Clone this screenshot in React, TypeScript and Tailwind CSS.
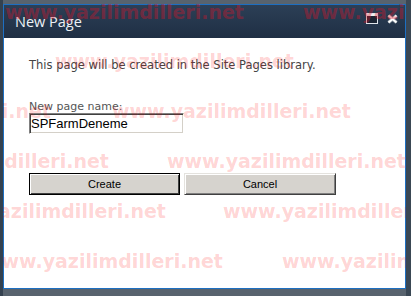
import * as React from 'react';

// watermark rows: [left, top]
const marks: [number, number][] = [
  [55, 52],
  [-188, 102],
  [112, 102],
  [-130, 152],
  [167, 152],
  [-73, 202],
  [223, 202],
  [-16, 252],
  [282, 252],
];

function App() {
  return (
    <div className="relative w-[411px] h-[296px] overflow-hidden bg-[#58636e] pt-[4px] pb-[7px] border-l-[3px] border-l-[#34414f] border-r-[5px] border-r-[#3a4754]">
      <div className="flex flex-col h-full border border-[#1d6fc2] bg-white">
        {/* Title bar */}
        <div className="flex h-[33px] bg-gradient-to-b from-[#2c3f56] to-[#1f2f44]">
          <span className="self-center pl-[11px] font-['Open_Sans'] text-[14.5px] text-[#eef2f6]">New Page</span>
          <div className="ml-auto mr-[7px] pt-[8px] flex items-start gap-[9px]">
            <svg width="12" height="11" viewBox="0 0 12 11">
              <rect x="0.5" y="0.5" width="11" height="10" fill="#1a2433" stroke="#dfe4ea" />
              <rect x="1" y="1" width="10" height="2" fill="#eef1f4" />
            </svg>
            <svg width="11" height="10" viewBox="0 0 11 10" className="mt-[1px]">
              <path d="M1.5 1.5 L9.5 8.5 M9.5 1.5 L1.5 8.5" stroke="#8a949f" strokeWidth="3.6" />
              <path d="M1.5 1.5 L9.5 8.5 M9.5 1.5 L1.5 8.5" stroke="#ffffff" strokeWidth="1.8" />
            </svg>
          </div>
        </div>

        {/* Body */}
        <div className="flex-1 pl-[25px] pt-[20px]">
          <p className="font-['DejaVu_Sans'] text-[11.5px] leading-[14px] text-[#444]">
            This page will be created in the Site Pages library.
          </p>
          <p className="mt-[28px] font-['DejaVu_Sans'] text-[11px] leading-[13px] text-[#555]">New page name:</p>
          <input
            readOnly
            value="SPFarmDeneme"
            className="block w-[155px] h-[21px] pl-[1px] border border-t-[#808080] border-l-[#808080] border-r-white border-b-white shadow-[inset_1px_1px_0_#404040,inset_-1px_-1px_0_#d4d0c8] font-['Liberation_Sans'] text-[13px] text-black outline-none"
          />
          <div className="mt-[39px] flex gap-[4px]">
            <button className="w-[151px] h-[22px] border border-black bg-[#d6d3ce] shadow-[inset_1px_1px_0_#ffffff,inset_-1px_-1px_0_#404040] font-['Liberation_Sans'] text-[11px] text-black">
              Create
            </button>
            <button className="w-[152px] h-[22px] border border-t-[#e4e2de] border-l-[#e4e2de] border-r-[#404040] border-b-[#404040] bg-[#d6d3ce] shadow-[inset_1px_1px_0_#ffffff,inset_-1px_-1px_0_#808080] font-['Liberation_Sans'] text-[11px] text-black">
              Cancel
            </button>
          </div>
        </div>
      </div>

      {/* Watermarks */}
      <div className="pointer-events-none absolute inset-0 font-['DejaVu_Sans'] font-bold text-[19px] leading-[19px] whitespace-nowrap">
        <span className="absolute left-[2px] top-[3px] text-[rgba(220,20,40,0.4)]">www.yazilimdilleri.net</span>
        <span className="absolute left-[300px] top-[3px] text-[rgba(220,20,40,0.4)]">www.yazilimdilleri.net</span>
        {marks.map(([x, y], i) => (
          <span key={i} className="absolute text-[rgba(255,0,0,0.18)]" style={{ left: x - 3, top: y }}>
            www.yazilimdilleri.net
          </span>
        ))}
      </div>
    </div>
  );
}

export default App;
